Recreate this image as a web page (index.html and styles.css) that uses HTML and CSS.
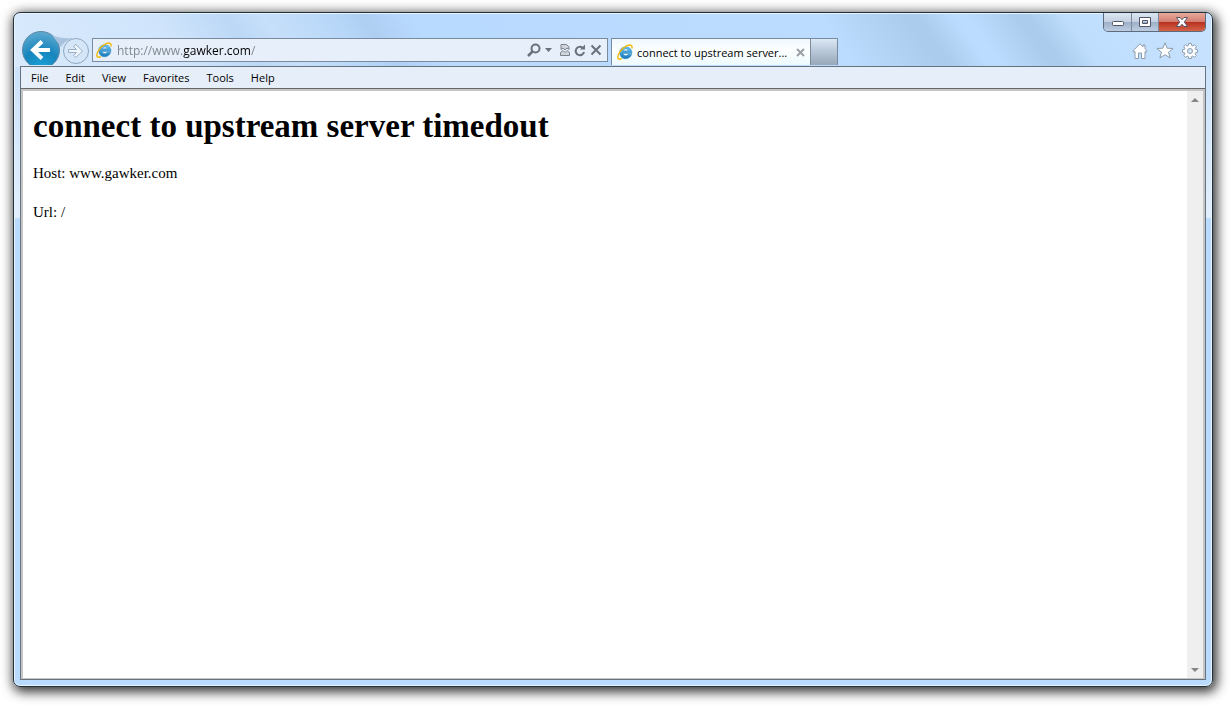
FILE: index.html
```
<!DOCTYPE html>
<html lang="en">
<head>
<meta charset="utf-8">
<title>connect to upstream server timedout</title>
<link rel="stylesheet" href="styles.css">
</head>
<body>
<svg class="defs" aria-hidden="true">
  <defs>
    <linearGradient id="blue" x1="0" y1="0" x2="0" y2="1"><stop offset="0" stop-color="#69c4ee"/><stop offset="1" stop-color="#1878bd"/></linearGradient>
    <radialGradient id="orb" cx=".5" cy="1" r="1"><stop offset="0" stop-color="#1ca3d8"/><stop offset=".5" stop-color="#1685bd"/><stop offset="1" stop-color="#5eaad0"/></radialGradient>
    <symbol id="ie" viewBox="0 0 16 16">
      <path d="M15 9.500H6.300c.3 2.500 3.700 2.700 4.800.8h3.600C13 16.800 2.700 16.300 2.600 8.500 2.800.8 15.400.8 15 9.500ZM6.300 6.800h4.900C11 4.400 6.700 4.300 6.300 6.800Z" fill="url(#blue)" stroke="#2482bd" stroke-width=".4"/>
      <path d="M15 4.500C15.600.7 13 .3 9.200 2.200 4.600 4.500.400 10.400.8 13.700c.2 2 2 1.900 4 .8" fill="none" stroke="#f3b90d" stroke-width="1.500"/>
    </symbol>
  </defs>
</svg>
<div class="window">
  <header class="chrome">
    <div class="caption">
      <button class="cap cap-min" aria-label="Minimize"><svg width="14" height="8" viewBox="0 0 14 8"><rect x="1.500" y="3.500" width="11" height="4" rx="1" fill="#fff" stroke="#535666"/></svg></button>
      <button class="cap cap-max" aria-label="Maximize"><svg width="14" height="12" viewBox="0 0 14 12"><path d="M1.500 1.500h11v9h-11zM4.500 4.500v3h5v-3z" fill="#fff" fill-rule="evenodd" stroke="#535666"/></svg></button>
      <button class="cap cap-close" aria-label="Close"><svg width="14" height="12" viewBox="0 0 14 12"><path d="M1.500 1.500h3.500l2 2.200 2-2.200h3.500L9.300 6l3.200 4.500H9L7 8.300l-2 2.200H1.500L4.700 6z" fill="#fff" stroke="#535666"/></svg></button>
    </div>
    <nav class="history" aria-label="History">
      <button class="back" aria-label="Back"><svg width="38" height="38" viewBox="0 0 38 38"><circle cx="19" cy="19" r="18.500" fill="url(#orb)" stroke="#5d87a5"/><path d="M10 19h18M20 10.500L11 19l9 8.500" fill="none" stroke="#fff" stroke-width="4"/></svg></button>
      <svg class="bridge" width="24" height="12" viewBox="0 0 24 12"><path d="M0 0Q9 4 22 3Q12 6 9 12Z" fill="#a9c3de"/></svg>
      <button class="forward" aria-label="Forward"><svg width="28" height="28" viewBox="0 0 28 28"><circle cx="14" cy="14" r="12.500" fill="#d5e6f8" stroke="#8fa8c0"/><path d="M6.500 12.500h8L11.500 9.500l2.300-2 6.700 6.500-6.700 6.500-2.300-2 3-3h-8z" fill="#eef5fd" stroke="#9bb0c5"/></svg></button>
    </nav>
    <form class="address">
      <svg class="favicon" viewBox="0 0 16 16"><use href="#ie"/></svg>
      <input class="url" type="text" aria-label="Address" value="http://www.gawker.com/">
      <button class="tool search" type="button" aria-label="Search"><svg width="14" height="14" viewBox="0 0 14 14"><circle cx="8.500" cy="5.500" r="4" fill="none" stroke="#69717b" stroke-width="2"/><path d="M5.500 8.500L1 13" stroke="#69717b" stroke-width="2.500"/></svg></button>
      <button class="tool drop" type="button" aria-label="Show address list"><svg width="7" height="4" viewBox="0 0 7 4"><path d="M0 0h7L3.500 4z" fill="#69717b"/></svg></button>
      <button class="tool compat" type="button" aria-label="Compatibility view"><svg width="10" height="12" viewBox="0 0 10 12"><path d="M1 5.500V.5h5.500L9 3v2.500L7 4 5 6 3 4zM.5 8.500L3 6.500l2 2L7 6.500l2.500 2v3h-9z" fill="#d0d5dc" stroke="#7b838d"/></svg></button>
      <button class="tool" type="button" aria-label="Refresh"><svg width="12" height="13" viewBox="0 0 12 13"><path d="M8.500 3.700A4.200 4.200 0 1 0 10 8" fill="none" stroke="#69717b" stroke-width="2"/><path d="M6 5.500h5V.5z" fill="#69717b"/></svg></button>
      <button class="tool" type="button" aria-label="Stop"><svg width="12" height="12" viewBox="0 0 12 12"><path d="M1.500 1.500l9 9M10.500 1.500l-9 9" stroke="#69717b" stroke-width="2"/></svg></button>
    </form>
    <div class="tabs">
      <div class="tab">
        <svg class="favicon" viewBox="0 0 16 16"><use href="#ie"/></svg>
        <span class="tab-title">connect to upstream server...</span>
        <button class="tab-close" aria-label="Close tab"><svg width="9" height="9" viewBox="0 0 9 9"><path d="M1 1l7 7M8 1L1 8" stroke="#9aa0a5" stroke-width="2"/></svg></button>
      </div>
      <button class="new-tab" aria-label="New tab"></button>
    </div>
    <div class="commands">
      <button class="tool" aria-label="Home"><svg width="16" height="16" viewBox="0 0 16 16"><path d="M8 .8L.8 8l1 1.200L3 8.500v7h3.500V10h3v5.500H13v-7l1.200.7 1-1.200L13 5.800V2h-2v1.800z" fill="#fff" stroke="#8c9cac"/></svg></button>
      <button class="tool" aria-label="Favorites"><svg width="18" height="17" viewBox="0 0 18 17"><path d="M9 .8l2.200 5.400 5.900.3-4.600 3.700 1.600 5.700L9 12.700l-5.100 3.200 1.600-5.700L.9 6.500l5.900-.3z" fill="#fff" stroke="#8c9cac"/></svg></button>
      <button class="tool" aria-label="Tools"><svg width="16" height="16" viewBox="0 0 16 16"><path d="M6.700.5h2.600l.4 2 1 .5 1.800-1.200 1.800 1.800L13.100 5.400l.4 1 2 .4v2.500l-2 .4-.4 1 1.200 1.800-1.800 1.800-1.800-1.200-1 .4-.4 2H6.700l-.4-2-1-.4-1.800 1.200-1.800-1.800 1.200-1.800-.4-1-2-.4V6.800l2-.4.4-1L1.700 3.600l1.800-1.800L5.300 3l1-.5z" fill="#fff" stroke="#8c9cac"/><circle cx="8" cy="8" r="2.500" fill="#d3e6fa" stroke="#8c9cac"/></svg></button>
    </div>
  </header>
  <div class="client">
    <nav class="menubar" aria-label="Menu">
      <button>File</button><button>Edit</button><button>View</button><button>Favorites</button><button>Tools</button><button>Help</button>
    </nav>
    <div class="viewport">
      <main class="page">
        <h1>connect to upstream server timedout</h1>
        <p>Host: www.gawker.com</p>
        <p>Url: /</p>
      </main>
      <div class="scrollbar">
        <button aria-label="Scroll up"><svg width="8" height="4" viewBox="0 0 8 4"><path d="M0 4h8L4 0z" fill="#858585"/></svg></button>
        <button aria-label="Scroll down"><svg width="8" height="4" viewBox="0 0 8 4"><path d="M0 0h8L4 4z" fill="#858585"/></svg></button>
      </div>
    </div>
  </div>
</div>
</body>
</html>
```
FILE: styles.css
```
* { box-sizing: border-box; }
body {
  margin: 0;
  height: 100vh;
  padding: 12px 18px 19px 13px;
  background: #fff;
  font: 12px/16px "Open Sans", "Noto Sans", sans-serif;
  color: #000;
  overflow: hidden;
}
button {
  margin: 0;
  padding: 0;
  border: 0;
  background: none;
  font: inherit;
  color: inherit;
}
svg { display: block; flex: none; }
.defs { position: absolute; width: 0; height: 0; }

.window {
  height: 100%;
  display: flex;
  flex-direction: column;
  padding: 0 6px 6px;
  border: 1px solid #20303c;
  border-radius: 7px;
  background:
    linear-gradient(55deg, #d8e9fb 0, #d0e5fc 14%, #bcd8f6 20%, #c6dffa 23%, #b6d6f8 29%, #aecff2 31%, #b9daff 35%, #bbdcfe 68%, #abccec 75%, #abccec 76%, #bbdcfe 79%, #bbdcfe 80%, #abccec 84%, #abccec 85%, #bfdefe 88%, #c8e2fe 100%) 0 0 / 100% 54px no-repeat,
    linear-gradient(#c3defa, #e2effd 204px, #b9dbfd 206px, #b9dbfd);
  box-shadow: inset 0 0 0 1px #e9f4ff, 2px 3px 12px 2px #000c;
}
.chrome {
  position: relative;
  display: flex;
  align-items: flex-start;
  height: 53px;
  padding-top: 25px;
}
.caption {
  position: absolute;
  top: 0;
  right: 0;
  display: flex;
  height: 19px;
  border: 1px solid #5d6b7c;
  border-top: 0;
  border-radius: 0 0 5px 5px;
  overflow: hidden;
}
.cap {
  display: flex;
  align-items: center;
  justify-content: center;
  width: 28px;
  border-right: 1px solid #7b8999;
  background: linear-gradient(#dce6f2, #c4d1e1 48%, #9eb0c7 52%, #bccde3);
}
.cap-max { width: 27px; }
.cap-close {
  width: 46px;
  border-right: 0;
  background: linear-gradient(#e9aa9c, #d37e70 48%, #b93221 52%, #d36348);
}

.history {
  position: relative;
  display: flex;
  align-items: flex-end;
  width: 72px;
  height: 34px;
  margin-top: -7px;
  padding-left: 2px;
}
.back {
  display: flex;
  align-items: flex-start;
  width: 38px;
  height: 34px;
  overflow: hidden;
}
.forward { margin-left: 2px; }
.bridge { position: absolute; left: 32px; top: 4px; }
.address {
  display: flex;
  align-items: center;
  width: 516px;
  flex-shrink: 1;
  height: 24px;
  padding: 0 5px 0 3px;
  gap: 4px;
  border: 1px solid #7a8b9d;
  background: #e7effa;
}
.favicon { width: 16px; height: 16px; }
.url {
  flex: 1;
  min-width: 0;
  height: 20px;
  padding: 0 0 0 1px;
  border: 0;
  outline: 0;
  font: inherit;
  -webkit-text-fill-color: transparent;
  color: #000;
  background: linear-gradient(90deg, #7d838b 67px, #000 67px, #000 135px, #7d838b 135px);
  -webkit-background-clip: text;
  background-clip: text;
}
.drop { margin-right: 4px; }
.tabs { display: flex; margin-left: 3px; height: 27px; }
.tab {
  display: flex;
  align-items: center;
  width: 200px;
  padding: 0 5px;
  border: 1px solid #7a8b9d;
  border-bottom: 0;
  background: linear-gradient(#eff7ff, #fdffff 40%, #edfafd);
}
.tab-title {
  flex: 1;
  min-width: 0;
  margin-left: 4px;
  padding-top: 2px;
  overflow: hidden;
  font-size: 11px;
  white-space: nowrap;
}
.new-tab {
  width: 27px;
  border: 1px solid #7a8b9d;
  border-width: 1px 1px 0 0;
  background: linear-gradient(#dbe8f5, #b9c9d9 45%, #98a8b8);
}
.commands {
  display: flex;
  align-items: center;
  gap: 8px;
  height: 25px;
  margin-left: auto;
  padding-right: 8px;
}

.client {
  flex: 1;
  min-height: 0;
  display: flex;
  flex-direction: column;
  border: 1px solid #66727e;
}
.menubar {
  display: flex;
  gap: 17px;
  height: 22px;
  padding: 0 10px;
  border-bottom: 1px solid #66676b;
  background: #e6eef9;
  font-size: 11px;
}
.viewport {
  flex: 1;
  min-height: 0;
  display: flex;
  border: 2px solid #c5c5c5;
  border-bottom-width: 1px;
  background: #fff;
}
.page {
  flex: 1;
  padding: 17px 10px;
  font: 15px/18px "Liberation Serif", serif;
}
.page h1 { margin: 0 0 19px; font-size: 33px; line-height: 37px; }
.page p { margin: 0 0 21px; }
.scrollbar {
  display: flex;
  flex-direction: column;
  justify-content: space-between;
  width: 16px;
  background: #efefef;
}
.scrollbar button { display: grid; place-items: center; height: 17px; }
```
